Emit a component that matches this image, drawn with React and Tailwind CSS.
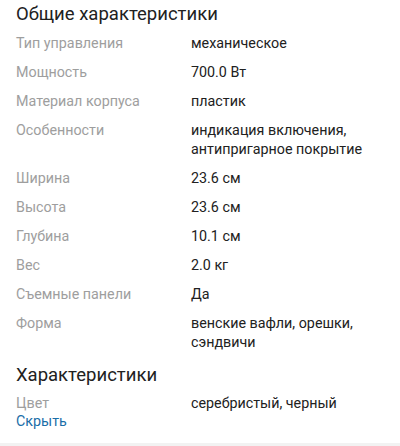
export default function App() {
  const rows1 = [
    ["Тип управления", "механическое"],
    ["Мощность", "700.0 Вт"],
    ["Материал корпуса", "пластик"],
    ["Особенности", "индикация включения, антипригарное покрытие"],
    ["Ширина", "23.6 см"],
    ["Высота", "23.6 см"],
    ["Глубина", "10.1 см"],
    ["Вес", "2.0 кг"],
    ["Съемные панели", "Да"],
    ["Форма", "венские вафли, орешки, сэндвичи"],
  ];
  return (
    <div className="w-[400px] h-[446px] bg-white overflow-hidden border-b-[3px] border-[#f2f2f2] px-4" style={{ fontFamily: "Roboto, sans-serif" }}>
      <div className="text-[18.5px] leading-[28px] text-[#212121]">Общие характеристики</div>
      <div className="flex flex-col gap-[10px] mt-[6px]">
        {rows1.map(([k, v]) => (
          <div key={k} className="flex text-[14.3px] leading-[19px]">
            <div className="w-[175px] shrink-0 text-[#9e9e9e]">{k}</div>
            <div className="w-[180px] text-[#212121]">{v}</div>
          </div>
        ))}
      </div>
      <div className="text-[18.5px] leading-[28px] text-[#212121] mt-[9px]">Характеристики</div>
      <div className="flex text-[14.3px] leading-[19px] mt-[5px]">
        <div className="w-[175px] shrink-0 text-[#9e9e9e]">Цвет</div>
        <div className="text-[#212121]">серебристый, черный</div>
      </div>
      <div className="text-[14.3px] leading-[19px] text-[#1a6ea8] -mt-[1px]">Скрыть</div>
    </div>
  );
}
